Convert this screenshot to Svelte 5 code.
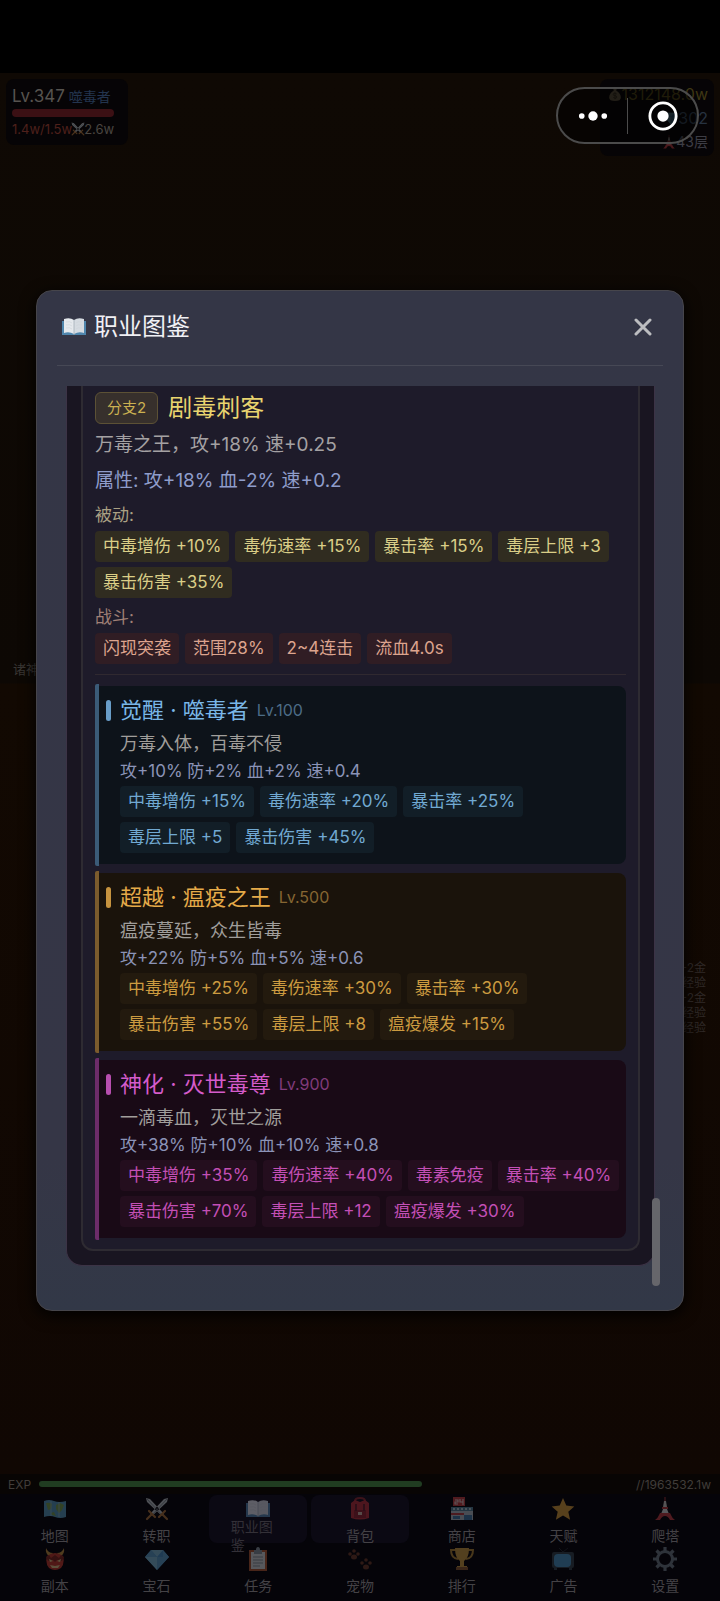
<script lang="ts">
	type Tier = {
		tone: 'blue' | 'gold' | 'pink';
		name: string;
		level: number;
		desc: string;
		stats: string;
		traits: string[];
	};

	const passives = ['中毒增伤 +10%', '毒伤速率 +15%', '暴击率 +15%', '毒层上限 +3', '暴击伤害 +35%'];
	const combat = ['闪现突袭', '范围28%', '2~4连击', '流血4.0s'];

	const tiers: Tier[] = [
		{
			tone: 'blue',
			name: '觉醒 · 噬毒者',
			level: 100,
			desc: '万毒入体，百毒不侵',
			stats: '攻+10% 防+2% 血+2% 速+0.4',
			traits: ['中毒增伤 +15%', '毒伤速率 +20%', '暴击率 +25%', '毒层上限 +5', '暴击伤害 +45%']
		},
		{
			tone: 'gold',
			name: '超越 · 瘟疫之王',
			level: 500,
			desc: '瘟疫蔓延，众生皆毒',
			stats: '攻+22% 防+5% 血+5% 速+0.6',
			traits: ['中毒增伤 +25%', '毒伤速率 +30%', '暴击率 +30%', '暴击伤害 +55%', '毒层上限 +8', '瘟疫爆发 +15%']
		},
		{
			tone: 'pink',
			name: '神化 · 灭世毒尊',
			level: 900,
			desc: '一滴毒血，灭世之源',
			stats: '攻+38% 防+10% 血+10% 速+0.8',
			traits: ['中毒增伤 +35%', '毒伤速率 +40%', '毒素免疫', '暴击率 +40%', '暴击伤害 +70%', '毒层上限 +12', '瘟疫爆发 +30%']
		}
	];

	const nav = [
		{ icon: 'map', label: '地图' },
		{ icon: 'swords', label: '转职' },
		{ icon: 'book', label: '职业图鉴', active: true, wrap: true },
		{ icon: 'bag', label: '背包', active: true },
		{ icon: 'shop', label: '商店' },
		{ icon: 'star', label: '天赋' },
		{ icon: 'tower', label: '爬塔' },
		{ icon: 'demon', label: '副本' },
		{ icon: 'gem', label: '宝石' },
		{ icon: 'tasks', label: '任务' },
		{ icon: 'paws', label: '宠物' },
		{ icon: 'cup', label: '排行' },
		{ icon: 'tv', label: '广告' },
		{ icon: 'gear', label: '设置' }
	];

	const log = ['+2金', '经验', '+2金', '经验', '经验'];
	const expPercent = 65;
</script>

{#snippet icon(name: string)}
	<svg class="icon" viewBox="0 0 24 24" aria-hidden="true">
		{#if name === 'map'}
			<path d="M1 4q5-2 10 0t12 0v16q-6 2-11 0t-11 0z" fill="#5b9fc4" />
			<path d="M3 6q4-1 6 1l-1 5-3 1zM13 8l4-2 4 2-2 5-3 3-3-4zM8 16l3-1 2 4-4-1z" fill="#7fa653" />
			<path d="M8 4v15M16 5v15" stroke="#9cc4d0" stroke-width=".8" />
		{:else if name === 'swords'}
			<path d="M1 1l4 1 14 15-2 2L2 5zM23 1l-4 1L5 17l2 2L22 5z" fill="#c5cdd2" />
			<path d="M2 2l15 16M22 2L7 18" stroke="#748089" stroke-width=".8" />
			<path d="M14 20l6-6M10 20l-6-6M18 18l4 4M6 18l-4 4" stroke="#b1763b" stroke-width="2.2" stroke-linecap="round" />
		{:else if name === 'book'}
			<path d="M0 6h24v14H0z" fill="#4f86ad" />
			<path d="M2 4q6-2 10 1v14q-5-3-10-1z" fill="#e5e9ed" />
			<path d="M22 4q-6-2-10 1v14q5-3 10-1z" fill="#d5dbe1" />
			<path d="M4 7q4-1 6 1M4 10q4-1 6 1M4 13q4-1 6 1M20 7q-4-1-6 1M20 10q-4-1-6 1M20 13q-4-1-6 1" fill="none" stroke="#cdd4d9" stroke-width=".6" />
			<path d="M12 5v15" stroke="#a3aeb8" stroke-width=".8" />
		{:else if name === 'bag'}
			<path d="M7 4q0-3 5-3t5 3v4H7z" fill="none" stroke="#8c2427" stroke-width="2" />
			<path d="M3 6l4-3 5 2 5-2 4 3v15q-9 3-18 0z" fill="#ba2c31" />
			<path d="M6 13h12v8H6z" fill="#8e2027" />
			<path d="M8 7v7M16 7v7" stroke="#651922" stroke-width="2" />
			<path d="M10 15h4v3h-4z" fill="#d4b8a2" />
		{:else if name === 'shop'}
			<path d="M3 0h12v9H3z" fill="#c93f42" />
			<path d="M5 3h3v2H5v2h3M13 2v6M10 2v3h3" fill="none" stroke="#f1dddd" stroke-width="1.1" />
			<path d="M1 10h22v13H1z" fill="#b8c3cd" />
			<path d="M1 10h22v4H1z" fill="#55849c" />
			<path d="M3 11h2v2H3zm4 0h2v2H7zm4 0h2v2h-2zm4 0h2v2h-2zm4 0h2v2h-2z" fill="#b9d2dc" />
			<path d="M1 16h13v2H1z" fill="#c04246" />
			<path d="M3 19h7v3H3zm11-1h8v5h-8z" fill="#447ead" />
		{:else if name === 'star'}
			<path d="M12 1l3.3 7.6 8 .8-6 5.4 1.8 8L12 18.6 4.9 22.8l1.8-8-6-5.4 8-.8z" fill="#dca13c" />
		{:else if name === 'tower'}
			<path d="M11.5 0h1v5h-1z" fill="#c34242" />
			<path d="M11 4h2l1 6h-4z" fill="#d5d4cd" />
			<path d="M9 10h6v2H9z" fill="#be393d" />
			<path d="M10 12h4l2 5H8z" fill="#ddd" />
			<path d="M7 16h10l1 2q1 3 4 5h-5q-2-4-5-4t-5 4H2q3-2 4-5z" fill="#c83f43" />
		{:else if name === 'demon'}
			<path d="M3 1q-1 6 4 9l3-4Q5 6 3 1zM21 1q1 6-4 9l-3-4q5 0 7-5z" fill="#c89742" />
			<path d="M4 9q8-6 16 0 2 7-2 12-6 4-12 0-4-5-2-12z" fill="#ca3d2f" />
			<path d="M3 10l3-2 2 3 4-3 4 3 2-3 3 2-2 4-5-1-2 2-2-2-5 1z" fill="#842820" />
			<path d="M6 12l4 2-3 1zM18 12l-4 2 3 1zM7 18l5 1 5-1-2 3H9z" fill="#e9cb8c" />
		{:else if name === 'gem'}
			<path d="M6 3h12l6 7-12 13L0 10z" fill="#4a94cb" />
			<path d="M6 3l6 7 6-7zM0 10h12v13z" fill="#82c0dc" />
			<path d="M6 3L0 10h12zM18 3l6 7-12 13V10h6z" fill="#5fa5d1" />
		{:else if name === 'tasks'}
			<path d="M3 3h18v21H3z" fill="#b55c33" />
			<path d="M5 5h14v17H5z" fill="#dce1e4" />
			<path d="M8 3h2q0-3 2-3t2 3h2v4H8z" fill="#8c9aa5" />
			<path d="M7 10h10M7 13h10M7 16h10M7 19h7" stroke="#8d989f" />
		{:else if name === 'paws'}
			<g fill="#713d29">
				<circle cx="2" cy="7" r="1.8" /><circle cx="6" cy="4" r="1.8" /><circle cx="10" cy="7" r="1.8" />
				<ellipse cx="6" cy="10" rx="3" ry="2.5" />
				<circle cx="14" cy="16" r="1.8" /><circle cx="18" cy="13" r="1.8" /><circle cx="22" cy="16" r="1.8" />
				<ellipse cx="18" cy="20" rx="3" ry="2.5" />
			</g>
		{:else if name === 'cup'}
			<path d="M6 3H1q0 8 7 9M18 3h5q0 8-7 9" fill="none" stroke="#b68a38" stroke-width="2" />
			<path d="M5 1h14q0 10-5 13v5h3v4H7v-4h3v-5Q5 11 5 1z" fill="#d2a143" />
			<path d="M6 20h12v3H6z" fill="#8f5c31" />
		{:else if name === 'tv'}
			<path d="M8 1l4 4 5-4" fill="none" stroke="#252d33" />
			<rect x="1" y="5" width="22" height="16" rx="2" fill="#35444d" />
			<rect x="3" y="7" width="17" height="13" rx="4" fill="#4d9bcb" />
			<path d="M3 21h3v2H3zM18 21h3v2h-3z" fill="#35444d" />
		{:else if name === 'gear'}
			<circle cx="12" cy="12" r="7.5" fill="none" stroke="#727f8a" stroke-width="3" />
			<path d="M12 0v4M12 20v4M0 12h4M20 12h4M3.5 3.5l3 3M17.5 17.5l3 3M20.5 3.5l-3 3M6.5 17.5l-3 3" stroke="#727f8a" stroke-width="3.2" />
		{:else if name === 'money'}
			<path d="M8 1h8l-2 5q8 5 8 12 0 6-10 6T2 18Q2 11 10 6z" fill="#b7a579" />
			<path d="M15 12q-6-3-6 1 0 2 3 2t3 2q0 4-6 1M12 9v12" fill="none" stroke="#5c5134" stroke-width="1.5" />
		{/if}
	</svg>
{/snippet}

<div class="page">
	<div class="notch"></div>

	<main class="scene">
		<div class="hud">
			<section class="player">
				<div class="who"><b>Lv.347</b> <span>噬毒者</span></div>
				<div class="hp"></div>
				<div class="power"><span>1.4w/1.5w</span>{@render icon('swords')}<span class="attack">2.6w</span></div>
			</section>
			<section class="wallet">
				<div class="coins">{@render icon('money')}1312148.0w</div>
				<div class="gems">{@render icon('gem')}302</div>
				<div class="floor">{@render icon('tower')}43层</div>
			</section>
		</div>
		<p class="god">诸神</p>
		<div class="log">
			{#each log as line}
				<span>{line}</span>
			{/each}
		</div>
	</main>

	<footer class="dock">
		<div class="exp">
			<span>EXP</span>
			<div class="exp-track"><div class="exp-fill" style="width: {expPercent}%"></div></div>
			<span>//1963532.1w</span>
		</div>
		<nav class="menu">
			{#each nav as item}
				<button class="item" class:active={item.active} class:wrap={item.wrap}>
					{@render icon(item.icon)}
					<span>{item.label}</span>
				</button>
			{/each}
		</nav>
	</footer>

	<div class="overlay">
		<div class="modal" role="dialog" aria-labelledby="dialog-title">
			<header class="head">
				<h1 id="dialog-title">{@render icon('book')}职业图鉴</h1>
				<button class="close" aria-label="关闭">
					<svg viewBox="0 0 18 18"><path d="M2 2l14 14M16 2L2 16" /></svg>
				</button>
			</header>
			<div class="body">
				<div class="outer">
					<article class="branch">
						<div class="branch-head">
							<span class="badge">分支2</span>
							<h2>剧毒刺客</h2>
						</div>
						<p class="lead">万毒之王，攻+18% 速+0.25</p>
						<p class="lead attrs">属性: 攻+18% 血-2% 速+0.2</p>
						<p class="label">被动:</p>
						<ul class="chips passive">
							{#each passives as text}<li>{text}</li>{/each}
						</ul>
						<p class="label battle">战斗:</p>
						<ul class="chips combat">
							{#each combat as text}<li>{text}</li>{/each}
						</ul>
						<div class="tiers">
							{#each tiers as tier}
								<section class="tier {tier.tone}">
									<div class="tier-box">
										<h3><i></i>{tier.name}<small>Lv.{tier.level}</small></h3>
										<p class="desc">{tier.desc}</p>
										<p class="stats">{tier.stats}</p>
										<ul class="chips">
											{#each tier.traits as text}<li>{text}</li>{/each}
										</ul>
									</div>
								</section>
							{/each}
						</div>
					</article>
				</div>
				<div class="thumb"></div>
			</div>
		</div>
	</div>

	<div class="capsule">
		<button aria-label="更多">
			<svg viewBox="0 0 32 32"><circle cx="4" cy="16" r="3" /><circle cx="16" cy="16" r="5" /><circle cx="28" cy="16" r="3" /></svg>
		</button>
		<button aria-label="退出">
			<svg viewBox="0 0 32 32"><circle cx="16" cy="16" r="14" fill="none" stroke="#fff" stroke-width="3" /><circle cx="16" cy="16" r="6" /></svg>
		</button>
	</div>
</div>

<style>
	:global(body) {
		margin: 0;
		background: #000;
	}
	.page {
		position: relative;
		display: flex;
		flex-direction: column;
		min-height: 100vh;
		overflow: hidden;
		font-family: Inter, 'Noto Sans CJK SC', sans-serif;
		color: #4a4a4d;
	}
	.page * {
		box-sizing: border-box;
	}
	h1,
	h2,
	h3,
	p,
	ul {
		margin: 0;
		padding: 0;
		font-weight: 400;
	}
	ul {
		list-style: none;
	}
	button {
		border: 0;
		padding: 0;
		background: none;
		font: inherit;
		color: inherit;
	}
	.icon {
		flex: none;
		width: 24px;
		height: 24px;
	}

	.notch {
		height: 73px;
		background: #000;
	}
	.scene {
		position: relative;
		flex: 1;
		background: linear-gradient(#0f0904 0, #0d0804 610px, #120902 611px, #100703 100%);
	}
	.hud {
		display: flex;
		justify-content: space-between;
		align-items: flex-start;
		padding: 6px;
	}
	.player,
	.wallet {
		background: #060406;
		border-radius: 8px;
	}
	.player {
		width: 122px;
		padding: 4px 6px;
	}
	.who {
		display: flex;
		align-items: center;
		gap: 4px;
		height: 26px;
		font-size: 14px;
		color: #23344e;
		white-space: nowrap;
	}
	.who b {
		font-size: 17px;
		font-weight: 400;
		color: #56534f;
	}
	.hp {
		width: 102px;
		height: 8px;
		border-radius: 4px;
		background: #3b1014;
	}
	.power {
		display: flex;
		align-items: center;
		height: 24px;
		font-size: 13px;
		color: #4e201b;
	}
	.power .icon {
		width: 14px;
		height: 14px;
		margin: 0 -1px;
		opacity: 0.4;
	}
	.attack {
		color: #4a4641;
	}
	.wallet {
		display: flex;
		flex-direction: column;
		align-items: flex-end;
		width: 114px;
		padding: 3px 6px 2px;
		font-size: 16px;
		line-height: 24px;
	}
	.wallet div {
		display: flex;
		align-items: center;
		white-space: nowrap;
	}
	.wallet .icon {
		width: 14px;
		height: 14px;
		opacity: 0.35;
	}
	.coins {
		color: #3f3713;
	}
	.gems {
		color: #263240;
	}
	.floor {
		font-size: 14px;
		color: #3d3d45;
	}
	.god {
		position: absolute;
		top: 585px;
		left: 13px;
		font-size: 13px;
		line-height: 22px;
		color: #393633;
	}
	.log {
		position: absolute;
		top: 887px;
		right: 14px;
		display: flex;
		flex-direction: column;
		align-items: flex-end;
		font-size: 12px;
		line-height: 15px;
		color: #302a28;
	}

	.dock {
		background: #050409;
		padding-bottom: 8px;
	}
	.exp {
		display: flex;
		align-items: center;
		gap: 8px;
		height: 20px;
		padding: 0 9px 0 8px;
		background: #080504;
		font-size: 12px;
		color: #413d3a;
	}
	.exp-track {
		flex: 1;
		height: 6px;
	}
	.exp-fill {
		height: 6px;
		border-radius: 3px;
		background: #203c21;
	}
	.menu {
		display: grid;
		grid-template-columns: repeat(7, 1fr);
		gap: 2px 4px;
		padding: 1px 6px 0;
	}
	.item {
		display: flex;
		flex-direction: column;
		align-items: center;
		height: 48px;
		padding-top: 2px;
		border-radius: 8px;
		font-size: 14px;
		line-height: 30px;
		color: #444246;
	}
	.item .icon {
		opacity: 0.38;
	}
	.active {
		background: #0b0913;
	}
	.wrap span {
		width: 55px;
		margin-top: -3px;
		line-height: 18px;
		text-align: left;
		color: #333037;
	}

	.overlay {
		position: absolute;
		inset: 0;
		display: flex;
		align-items: center;
		justify-content: center;
	}
	.modal {
		width: 90%;
		border: 1px solid #46454b;
		border-radius: 16px;
		background: linear-gradient(#343646, #353646 85%, #323847);
		box-shadow: 0 4px 16px #000;
	}
	.head {
		display: flex;
		align-items: center;
		justify-content: space-between;
		height: 75px;
		margin: 0 20px;
		padding: 0 11px 2px 5px;
		border-bottom: 1px solid #464855;
	}
	h1 {
		display: flex;
		align-items: center;
		gap: 8px;
		font-size: 24px;
		line-height: 32px;
		color: #f0f0f4;
	}
	.close svg {
		display: block;
		width: 18px;
		height: 18px;
		fill: none;
		stroke: #bcbdc0;
		stroke-width: 3;
		stroke-linecap: round;
	}
	.body {
		position: relative;
		padding: 20px 28px 44px 29px;
	}
	.outer {
		padding: 0 14px 14px;
		border: 1px solid #3c3346;
		border-top: 0;
		border-radius: 0 0 16px 16px;
		background: #191521;
	}
	.branch {
		padding: 6px 12px 9px;
		border: 2px solid #2e2b32;
		border-top: 0;
		border-radius: 0 0 12px 12px;
		background: #1e1b2a;
	}
	.branch-head {
		display: flex;
		align-items: center;
		gap: 10px;
		height: 32px;
	}
	.badge {
		height: 32px;
		padding: 0 11px;
		border: 1px solid #5c5135;
		border-radius: 6px;
		background: #37302c;
		font-size: 15px;
		line-height: 30px;
		color: #cbb151;
	}
	h2 {
		font-size: 24px;
		line-height: 32px;
		color: #e9d46f;
	}
	.lead {
		font-size: 19px;
		line-height: 36px;
		color: #a4a1a3;
	}
	.branch-head + .lead {
		margin-top: 3px;
	}
	.attrs {
		color: #8f9dcb;
	}
	.label {
		font-size: 17px;
		line-height: 32px;
		color: #aaa083;
	}
	.battle {
		margin-top: 3px;
		color: #a08076;
	}
	.chips {
		display: flex;
		flex-wrap: wrap;
		gap: 5px 6px;
	}
	.chips li {
		padding: 0 8px;
		border-radius: 4px;
		font-size: 17px;
		line-height: 31px;
		white-space: nowrap;
	}
	.passive li {
		background: #302c20;
		color: #dace87;
	}
	.combat li {
		background: #301d24;
		color: #dda48e;
	}
	.tiers {
		display: flex;
		flex-direction: column;
		gap: 5px;
		margin-top: 10px;
		padding-top: 9px;
		border-top: 1px solid #302930;
	}
	.tier {
		padding: 2px 0;
		border-left: 4px solid;
		border-radius: 2px;
	}
	.tier-box {
		padding: 9px 4px 11px 21px;
		border-radius: 0 8px 8px 0;
	}
	h3 {
		display: flex;
		align-items: center;
		height: 30px;
		margin: 0 0 4px -14px;
		font-size: 22px;
		line-height: 30px;
	}
	h3 i {
		width: 5px;
		height: 21px;
		margin-right: 9px;
		border-radius: 3px;
		background: currentColor;
		opacity: 0.85;
	}
	h3 small {
		margin-left: 8px;
		font-size: 16px;
	}
	.desc {
		font-size: 18px;
		line-height: 30px;
		color: #a09e9b;
	}
	.stats {
		margin-bottom: 3px;
		font-size: 17px;
		line-height: 24px;
		color: #8b93b7;
	}
	.blue {
		border-color: #3b5b78;
	}
	.blue .tier-box {
		background: #0d131a;
	}
	.blue h3 {
		color: #79b6e7;
	}
	.blue small {
		color: #4c6c87;
	}
	.blue li {
		background: #121e27;
		color: #71a9d2;
	}
	.gold {
		border-color: #7b5b2d;
	}
	.gold .tier-box {
		background: #1a130b;
	}
	.gold h3 {
		color: #e5aa49;
	}
	.gold small {
		color: #866632;
	}
	.gold li {
		background: #231a0e;
		color: #cc9b40;
	}
	.pink {
		border-color: #6c2c69;
	}
	.pink .tier-box {
		background: #190a16;
	}
	.pink h3 {
		color: #d45bca;
	}
	.pink small {
		color: #803b7b;
	}
	.pink li {
		background: #240e1e;
		color: #c34fb5;
	}
	.thumb {
		position: absolute;
		right: 23px;
		bottom: 24px;
		width: 8px;
		height: 88px;
		border-radius: 4px;
		background: #66666b;
	}

	.capsule {
		position: absolute;
		top: 87px;
		right: 21px;
		display: flex;
		align-items: center;
		width: 143px;
		height: 57px;
		border: 2px solid #4b4b4b;
		border-radius: 29px;
		background: rgba(0, 0, 0, 0.5);
	}
	.capsule button {
		display: flex;
		flex: 1;
		align-items: center;
		justify-content: center;
		height: 36px;
	}
	.capsule button + button {
		border-left: 1px solid #4b4b4b;
	}
	.capsule svg {
		width: 30px;
		height: 30px;
		fill: #fff;
	}
</style>
